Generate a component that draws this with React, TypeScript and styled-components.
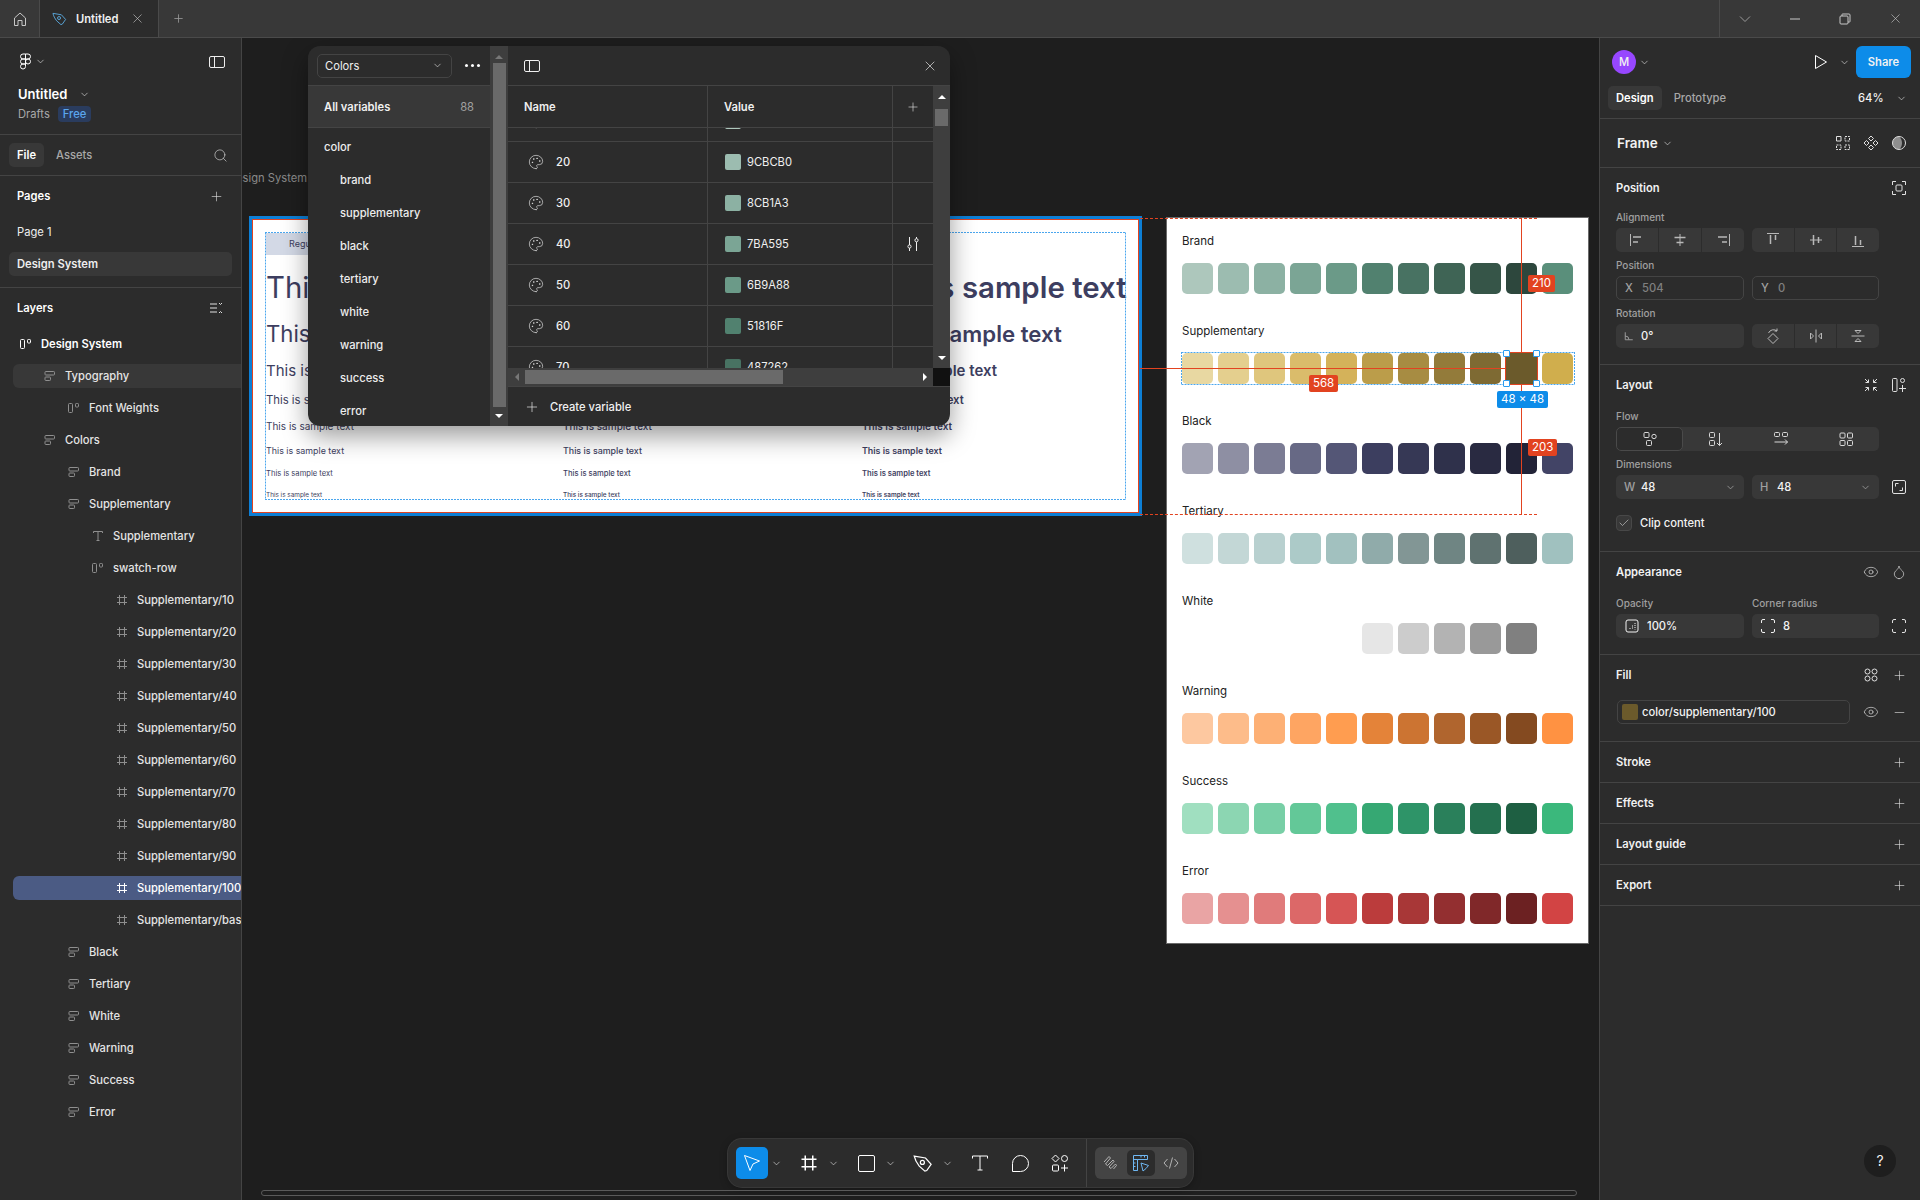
import React from "react";
import styled, { createGlobalStyle, css } from "styled-components";
import { ChevronDown, Eye, Droplet, Palette, Plus, Search, Minus, X, Check } from "lucide-react";

const GlobalStyle = createGlobalStyle`
  html, body { margin: 0; padding: 0; background: #1e1e1e; overflow: hidden; }
  * { box-sizing: border-box; }
  body { font-family: Inter, "Noto Sans", sans-serif; font-size: 11.2px; color: #fff; }
  svg { display: block; flex: none; }
`;

// figma-ish glyphs that the icon packs don't have
const Ico: React.FC<{ s?: number; v?: number; children: React.ReactNode }> = ({ s = 16, v = 16, children }) => (
  <svg width={s} height={s} viewBox={`0 0 ${v} ${v}`} fill="none" stroke="currentColor">
    {children}
  </svg>
);

const FigmaLogo = () => (
  <svg width="13" height="18" viewBox="0 0 13 18" fill="none" stroke="#fff">
    <path d="M6.5 1H4a2.5 2.5 0 0 0 0 5h2.5z" />
    <path d="M6.5 1H9a2.5 2.5 0 0 1 0 5H6.5z" />
    <path d="M6.5 6H4a2.5 2.5 0 0 0 0 5h2.5z" />
    <circle cx="9" cy="8.5" r="2.5" />
    <path d="M6.5 11H4a2.5 2.5 0 1 0 2.5 2.5z" />
  </svg>
);
const SidebarIcon = () => (
  <Ico>
    <rect x="0.5" y="2.5" width="15" height="11" rx="1.5" />
    <path d="M5.5 2.5v11" />
  </Ico>
);
const HomeIcon = () => (
  <Ico>
    <path d="M2.5 7L8 2l5.5 5v7.5h-3.5v-5H6v5H2.5z" />
  </Ico>
);
const PenIcon: React.FC<{ s?: number }> = ({ s = 16 }) => (
  <Ico s={s}>
    <path d="M1 2.5l9 1.5 4.5 5-3.5 5-1.5.5L5 10.5C3 8 1.5 5 1 2.5z" />
    <circle cx="7.5" cy="7.5" r="1.6" />
  </Ico>
);
const CollapseIcon = () => (
  <Ico>
    <path d="M2 4h7M2 8h7M2 12h7M11 3l1.5 1.5L14 3M11 13l1.5-1.5L14 13" />
  </Ico>
);
const AutoRowIcon = () => (
  <Ico s={12} v={12}>
    <rect x="0.5" y="1.5" width="4" height="9" rx="1" />
    <rect x="7.5" y="1.5" width="3" height="3.5" rx="0.8" />
  </Ico>
);
const StackIcon = () => (
  <Ico s={12} v={12}>
    <rect x="1" y="1.5" width="9.5" height="3.5" rx="0.8" />
    <rect x="1" y="7" width="5.5" height="3.5" rx="0.8" />
  </Ico>
);
const TextLayerIcon = () => (
  <Ico s={12} v={12}>
    <path d="M1.5 3V1.5h9V3M6 1.5v9M4.5 10.5h3" />
  </Ico>
);
const FrameIcon: React.FC<{ s?: number }> = ({ s = 12 }) => (
  <svg width={s} height={s} viewBox="0 0 12 12" fill="none" stroke="currentColor">
    <path d="M3.5 1v10M8.5 1v10M1 3.5h10M1 8.5h10" />
  </svg>
);
const SlidersIcon = () => (
  <Ico>
    <path d="M4.5 1v8M4.5 12v3M11.5 1v1.5M11.5 6v9" />
    <circle cx="4.5" cy="10.5" r="1.6" />
    <circle cx="11.5" cy="4.2" r="1.6" />
  </Ico>
);
const CursorIcon = () => (
  <svg width="20" height="20" viewBox="0 0 20 20" fill="none" stroke="#fff" strokeLinejoin="round">
    <path d="M2.5 2.5l15 5.5-6.5 3L8 17.5z" />
  </svg>
);
const RectTool = () => (
  <svg width="17" height="17" viewBox="0 0 17 17" fill="none" stroke="#fff">
    <rect x="0.5" y="0.5" width="16" height="16" rx="1.5" />
  </svg>
);
const TextTool = () => (
  <svg width="16" height="16" viewBox="0 0 16 16" fill="none" stroke="#fff">
    <path d="M.5 3.5V1h15v2.5M8 1v14M5.5 15h5" />
  </svg>
);
const CommentTool = () => (
  <svg width="17" height="17" viewBox="0 0 17 17" fill="none" stroke="#fff">
    <path d="M.5 16.5V8.5a8 8 0 1 1 8 8z" />
  </svg>
);
const ActionsTool = () => (
  <svg width="18" height="18" viewBox="0 0 18 18" fill="none" stroke="#fff">
    <path d="M4.5 1L8 4.5 4.5 8 1 4.5z" />
    <circle cx="13.5" cy="4.5" r="3" />
    <rect x="1.5" y="11" width="6" height="6" rx="1" />
    <path d="M13.5 10.5v7M10 14h7" />
  </svg>
);
const DrawMode = () => (
  <svg width="16" height="16" viewBox="0 0 16 16" fill="none" stroke="currentColor">
    <path d="M1 7l5-5.5L7.5 3 2.5 9l2 1.5L10 5l1 1.5-5 5.5 2 1.5L12.5 9l1 1.5-3 3.5" />
  </svg>
);
const DevMode = () => (
  <svg width="18" height="18" viewBox="0 0 18 18" fill="none" stroke="currentColor">
    <path d="M1.5 16.5v-15h14v4h-10v11zM5.5 5.5v11M1.5 5.5h4M1.5 9h2M1.5 12.5h2M9 1.5v2M12.5 1.5v2" />
    <path d="M9 9l7.5 2.5-2.5 3-3 2.5z" />
  </svg>
);
const CodeMode = () => (
  <svg width="16" height="16" viewBox="0 0 16 16" fill="none" stroke="currentColor">
    <path d="M4.5 4L1 8l3.5 4M11.5 4L15 8l-3.5 4M9.5 2.5l-3 11" />
  </svg>
);

const GlyphIcons: Record<string, React.ReactNode> = {
  grid: <Ico><path d="M1.5 1.5h4.5v4.5h-4.5z" /><path strokeDasharray="2 1" d="M10 1.5h4.5v4.5H10zM1.5 10H6v4.5H1.5zM10 10h4.5v4.5H10z" /></Ico>,
  comp: <Ico><path d="M8 1l2.5 2.5L8 6 5.5 3.5zM3.5 5.5L6 8l-2.5 2.5L1 8zM12.5 5.5L15 8l-2.5 2.5L10 8zM8 10l2.5 2.5L8 15l-2.5-2.5z" /></Ico>,
  mask: <Ico><circle cx="8" cy="8" r="6.5" /><path fill="currentColor" fillOpacity=".55" stroke="none" d="M8 1.5a6.5 6.5 0 0 0 0 13c2-1.5 3-4 3-6.5s-1-5-3-6.5z" /></Ico>,
  focus: <Ico><path d="M1.5 5V1.5H5M11 1.5h3.5V5M14.5 11v3.5H11M5 14.5H1.5V11" /><rect x="5" y="5" width="6" height="6" rx="1" /></Ico>,
  alL: <Ico><path d="M1.5 2v12" /><path d="M4 5h8M4 10h5" strokeWidth="1.5" /></Ico>,
  alC: <Ico><path d="M8 2v12" /><path d="M2.5 5.5h11M4.5 10.5h7" strokeWidth="1.5" /></Ico>,
  alR: <Ico><path d="M14.5 2v12" /><path d="M12 5H3M12 10H7" strokeWidth="1.5" /></Ico>,
  alT: <Ico><path d="M2 1.5h12" /><path d="M5.5 3v9M10.5 3v5" strokeWidth="1.5" /></Ico>,
  alM: <Ico><path d="M2 8h12" /><path d="M5.5 3v10M10.5 5v6" strokeWidth="1.5" /></Ico>,
  alB: <Ico><path d="M2 14.5h12" /><path d="M5.5 13V4M10.5 13V8" strokeWidth="1.5" /></Ico>,
  rot: <Ico><path d="M8 5.5L13 10.5 8 15.5 3 10.5zM3.5 5A5.5 5.5 0 0 1 12 3M12 .5V3H9.5" /></Ico>,
  flipH: <Ico><path d="M8 1.5v13M2.5 5l3 3-3 3zM13.5 5l-3 3 3 3z" /></Ico>,
  flipV: <Ico><path d="M1.5 8h13M5 2.5l3 3 3-3zM5 13.5l3-3 3 3z" /></Ico>,
  shrink: <Ico><path d="M2 2l3.5 3.5M5.5 2.5v3h-3M14 2l-3.5 3.5M10.5 2.5v3h3M2 14l3.5-3.5M5.5 13.5v-3h-3M14 14l-3.5-3.5M10.5 13.5v-3h3" /></Ico>,
  addLayout: <Ico><rect x="1.5" y="1.5" width="4.5" height="13" rx="1" /><circle cx="11.5" cy="3.5" r="2" /><path d="M11.5 8v7M8 11.5h7" /></Ico>,
  free: <Ico><rect x="2" y="1.5" width="5" height="5" rx="1" /><circle cx="12" cy="5.5" r="2.2" /><rect x="4.5" y="9.5" width="5" height="5" rx="1" /></Ico>,
  vert: <Ico><rect x="1.5" y="1.5" width="5" height="5" rx="1" /><rect x="1.5" y="9.5" width="5" height="5" rx="1" /><path d="M11.5 2v12.5M9 12l2.5 2.5L14 12" /></Ico>,
  horiz: <Ico><rect x="1.5" y="1.5" width="5" height="4" rx="1" /><rect x="9.5" y="1.5" width="5" height="4" rx="1" /><path d="M1.5 11h13M12 8.5l2.5 2.5-2.5 2.5" /></Ico>,
  wrap: <Ico><rect x="2" y="2" width="5" height="5" rx="1" /><rect x="9.5" y="2" width="5" height="5" rx="1" /><rect x="2" y="9.5" width="5" height="5" rx="1" /><rect x="9.5" y="9.5" width="5" height="5" rx="1" /></Ico>,
  resize: <Ico><rect x="1.5" y="1.5" width="13" height="13" rx="1.5" /><path d="M4.5 7.5v-3h3M11.5 8.5v3h-3" /></Ico>,
  corners: <Ico><path d="M1.5 5V3a1.5 1.5 0 0 1 1.5-1.5h2M11 1.5h2A1.5 1.5 0 0 1 14.5 3v2M14.5 11v2a1.5 1.5 0 0 1-1.5 1.5h-2M5 14.5H3A1.5 1.5 0 0 1 1.5 13v-2" /></Ico>,
  opacity: <Ico><rect x="2" y="2" width="12" height="12" rx="2" /><path strokeDasharray="1 1" d="M11 5v6.5M8.5 7.5v4M6 10v1.5" /></Ico>,
  styles: <Ico><circle cx="4.5" cy="4.5" r="2.5" /><circle cx="11.5" cy="4.5" r="2.5" /><circle cx="4.5" cy="11.5" r="2.5" /><circle cx="11.5" cy="11.5" r="2.5" /></Ico>,
};

// auto layout hover outline: dots drawn over the children
const dottedOverlay = css`
  position: relative;
  &::after {
    content: "";
    position: absolute;
    inset: -1px;
    pointer-events: none;
    background-image:
      linear-gradient(to right, #4aa6ee 60%, transparent 60%),
      linear-gradient(to right, #4aa6ee 60%, transparent 60%),
      linear-gradient(to bottom, #4aa6ee 60%, transparent 60%),
      linear-gradient(to bottom, #4aa6ee 60%, transparent 60%);
    background-size: 3px 1px, 3px 1px, 1px 3px, 1px 3px;
    background-position: top, bottom, left, right;
    background-repeat: repeat-x, repeat-x, repeat-y, repeat-y;
  }
`;

const Window = styled.div`
  width: 1920px;
  height: 1200px;
  display: flex;
  flex-direction: column;
  overflow: hidden;
`;

/* tab strip */
const TabBar = styled.header`
  height: 38px;
  flex: none;
  display: flex;
  align-items: stretch;
  background: #383838;
  border-bottom: 1px solid #4a4a4a;
  color: #c8c8c8;
`;
const HomeTab = styled.div`
  width: 40px;
  display: flex;
  align-items: center;
  justify-content: center;
  border-right: 1px solid #4a4a4a;
`;
const FileTab = styled.div`
  width: 119px;
  display: flex;
  align-items: center;
  padding-left: 12px;
  gap: 9px;
  background: #2c2c2c;
  border-right: 1px solid #4a4a4a;
  color: #5aa7dc;
`;
const FileTabName = styled.span`
  width: 45px;
  font-weight: 600;
  color: #f0f0f0;
`;
const NewTab = styled.div`
  width: 38px;
  display: flex;
  align-items: center;
  justify-content: center;
  color: #9a9a9a;
`;
const TabSpacer = styled.div`
  flex: 1;
  border-right: 1px solid #4a4a4a;
`;
const WinControl = styled.div`
  width: 50px;
  display: flex;
  align-items: center;
  justify-content: center;
  color: #c8c8c8;
`;

const Body = styled.div`
  flex: 1;
  display: flex;
  min-height: 0;
`;

/* left column */
const LeftPanel = styled.aside`
  width: 242px;
  flex: none;
  background: #2c2c2c;
  border-right: 1px solid #444;
  color: #eee;
  position: relative;
  z-index: 2;
`;
const LeftBlock = styled.div<{ $h: number }>`
  height: ${p => p.$h}px;
  border-bottom: 1px solid #444;
  padding: 0 9px;
`;
const LogoRow = styled.div`
  height: 47px;
  display: flex;
  align-items: center;
  padding: 0 7px 0 10px;
  gap: 3px;
`;
const Grow = styled.div`
  flex: 1;
`;
const ProjectName = styled.div`
  display: flex;
  align-items: center;
  height: 18px;
  padding-left: 9px;
  gap: 12px;
  font-size: 13px;
  font-weight: 600;
  color: #fff;
`;
const ProjectMeta = styled.div`
  display: flex;
  align-items: center;
  gap: 8px;
  padding-left: 9px;
  margin-top: 3px;
  color: #a8a8a8;
`;
const FreeBadge = styled.span`
  height: 16px;
  line-height: 16px;
  padding: 0 5px;
  border-radius: 4px;
  background: #2a3c5e;
  color: #5ba6ee;
  font-weight: 500;
`;
const TabsRow = styled.div`
  height: 40px;
  display: flex;
  align-items: center;
  gap: 4px;
  color: #eee;
`;
const PillTab = styled.div<{ $on?: boolean }>`
  height: 24px;
  line-height: 24px;
  padding: 0 8px;
  border-radius: 5px;
  font-weight: ${p => (p.$on ? 600 : 500)};
  color: ${p => (p.$on ? "#fff" : "#a8a8a8")};
  background: ${p => (p.$on ? "#383838" : "transparent")};
`;
const SectionHead = styled.div`
  height: 40px;
  display: flex;
  align-items: center;
  justify-content: space-between;
  padding: 0 4px 0 8px;
  font-weight: 600;
  color: #fff;
`;
const PageList = styled.div`
  display: flex;
  flex-direction: column;
  gap: 8px;
  padding-top: 4px;
`;
const PageRow = styled.div<{ $on?: boolean }>`
  height: 24px;
  line-height: 24px;
  padding: 0 8px;
  border-radius: 5px;
  font-weight: ${p => (p.$on ? 600 : 400)};
  background: ${p => (p.$on ? "#383838" : "transparent")};
`;
const LayerHead = styled(SectionHead)`
  padding: 0 13px 0 17px;
`;
const LayerList = styled.div`
  display: flex;
  flex-direction: column;
  gap: 8px;
  padding: 4px 0 0 13px;
`;
const LayerRow = styled.div<{ $level: number; $state?: "hover" | "selected"; $strong?: boolean }>`
  height: 24px;
  display: flex;
  align-items: center;
  gap: 9px;
  overflow: hidden;
  white-space: nowrap;
  border-radius: 6px 0 0 6px;
  padding-left: ${p => 7 + p.$level * 24}px;
  font-weight: ${p => (p.$strong ? 600 : 500)};
  color: ${p => (p.$strong || p.$state === "selected" ? "#fff" : "#e4e4e4")};
  background: ${p => (p.$state === "selected" ? "#4b5b84" : p.$state === "hover" ? "#383838" : "transparent")};
  svg { color: ${p => (p.$strong || p.$state === "selected" ? "#fff" : "#8f8f8f")}; }
`;

/* canvas */
const Canvas = styled.main`
  flex: 1;
  position: relative;
  overflow: hidden;
  background: #1e1e1e;
`;
const FrameLabel = styled.span`
  position: absolute;
  left: -14px;
  top: 133px;
  color: #8a8a8a;
`;
const TypeFrame = styled.section`
  position: absolute;
  left: 7px;
  top: 178px;
  width: 893px;
  height: 300px;
  padding: 14px;
  background: #fff;
  border: 3px solid #0d7fd6;
  box-shadow: inset 0 0 0 1px #e24320;
`;
const TypeInner = styled.div`
  ${dottedOverlay}
  height: 266px;
  color: #3d3e60;
  white-space: nowrap;
`;
const HeaderCell = styled.div`
  width: 120px;
  height: 22px;
  line-height: 22px;
  padding-left: 23px;
  background: #d3d9e6;
  font-size: 9px;
`;
const TypeGrid = styled.div`
  display: grid;
  grid-template-columns: 297px 299px 1fr;
  padding-top: 10px;
`;
const TypeLine = styled.div<{ $size: number; $h: number; $weight: number }>`
  height: ${p => p.$h}px;
  line-height: ${p => p.$h}px;
  font-size: ${p => p.$size}px;
  font-weight: ${p => p.$weight};
`;
const SwatchFrame = styled.section`
  position: absolute;
  left: 925px;
  top: 180px;
  width: 421px;
  height: 725px;
  padding: 14px 14px 0 15px;
  background: #fff;
  outline: 1px solid #6a6a6a;
  color: #222;
`;
const SwatchSection = styled.div`
  height: 90px;
`;
const SwatchTitle = styled.div`
  height: 18px;
  line-height: 18px;
  margin-bottom: 13px;
  font-size: 11.5px;
`;
const SwatchRow = styled.div<{ $dotted?: boolean }>`
  display: flex;
  gap: 5px;
  ${p => p.$dotted && dottedOverlay}
`;
const Swatch = styled.div<{ $c: string }>`
  width: 31px;
  height: 31px;
  border-radius: 5px;
  background: ${p => p.$c};
`;

/* measure overlays sit on top of the frames */
const RedV = styled.div<{ $x: number; $y: number; $h: number }>`
  position: absolute;
  left: ${p => p.$x}px;
  top: ${p => p.$y}px;
  height: ${p => p.$h}px;
  width: 1px;
  background: #e24320;
`;
const RedH = styled.div<{ $x: number; $y: number; $w: number; $dashed?: boolean }>`
  position: absolute;
  left: ${p => p.$x}px;
  top: ${p => p.$y}px;
  width: ${p => p.$w}px;
  height: 0;
  border-top: 1px ${p => (p.$dashed ? "dashed" : "solid")} #e24320;
`;
const MeasureTag = styled.div<{ $x: number; $y: number; $blue?: boolean }>`
  position: absolute;
  left: ${p => p.$x}px;
  top: ${p => p.$y}px;
  height: 17px;
  line-height: 17px;
  padding: 0 4px;
  border-radius: 2px;
  font-size: 11.5px;
  color: #fff;
  white-space: nowrap;
  background: ${p => (p.$blue ? "#0d8ce9" : "#e24320")};
`;
const Selection = styled.div`
  position: absolute;
  left: 1264px;
  top: 315px;
  width: 31px;
  height: 31px;
  background: #6b5a2b;
  outline: 1px solid #e24320;
`;
const Handle = styled.div<{ $r: boolean; $b: boolean }>`
  position: absolute;
  ${p => (p.$r ? "right" : "left")}: -3px;
  ${p => (p.$b ? "bottom" : "top")}: -3px;
  width: 7px;
  height: 7px;
  background: #fff;
  border: 1px solid #2a9bf0;
  border-radius: 1px;
`;

/* variables dialog */
const VarPanel = styled.section`
  position: absolute;
  left: 66px;
  top: 8px;
  width: 642px;
  height: 380px;
  display: flex;
  border-radius: 12px;
  overflow: hidden;
  background: #2c2c2c;
  color: #f0f0f0;
`;
const VarShadow = styled.div`
  position: absolute;
  left: 66px;
  top: 8px;
  width: 642px;
  height: 380px;
  border-radius: 12px;
  box-shadow: 0 10px 26px rgba(0, 0, 0, 0.4);
`;
const VarSide = styled.div`
  width: 182px;
  flex: none;
`;
const VarSideHead = styled.div`
  height: 40px;
  display: flex;
  align-items: center;
  padding-left: 9px;
  gap: 13px;
  border-bottom: 1px solid #444;
`;
const CollectionSelect = styled.div`
  width: 135px;
  height: 24px;
  display: flex;
  align-items: center;
  justify-content: space-between;
  padding: 0 8px 0 7px;
  border: 1px solid #444;
  border-radius: 5px;
`;
const MoreDots = styled.div`
  display: flex;
  gap: 3px;
`;
const Dot = styled.span`
  width: 3px;
  height: 3px;
  border-radius: 50%;
  background: #fff;
`;
const AllVars = styled.div`
  height: 42px;
  display: flex;
  align-items: center;
  justify-content: space-between;
  padding: 0 16px;
  background: #383838;
  border-bottom: 1px solid #444;
  font-weight: 600;
`;
const AllVarsCount = styled.span`
  font-weight: 400;
  color: #a0a0a0;
`;
const GroupList = styled.div`
  padding-top: 3px;
`;
const GroupRow = styled.div<{ $sub?: boolean }>`
  height: 33px;
  line-height: 33px;
  padding-left: ${p => (p.$sub ? 32 : 16)}px;
  font-weight: 500;
  color: #ededed;
`;
const VScroll = styled.div<{ $w: number }>`
  width: ${p => p.$w}px;
  flex: none;
  display: flex;
  flex-direction: column;
  align-items: center;
  background: #3e3e3e;
`;
const Arrow = styled.div<{ $dir: "up" | "down" | "left" | "right"; $dim?: boolean }>`
  width: 0;
  height: 0;
  flex: none;
  border: 4px solid transparent;
  ${p => `border-${{ up: "bottom", down: "top", left: "right", right: "left" }[p.$dir]}-color: ${p.$dim ? "#777" : "#fff"};`}
  ${p => `border-${p.$dir}-width: 0;`}
`;
const ScrollEnd = styled.div`
  height: 17px;
  flex: none;
  display: flex;
  align-items: center;
  justify-content: center;
`;
const VThumb = styled.div<{ $h: number }>`
  width: 13px;
  height: ${p => p.$h}px;
  flex: none;
  background: #6a6a6a;
`;
const VGap = styled.div<{ $h?: number }>`
  flex: ${p => (p.$h ? "none" : 1)};
  height: ${p => (p.$h ? `${p.$h}px` : "auto")};
`;
const VarMain = styled.div`
  flex: 1;
  min-width: 0;
  display: flex;
  flex-direction: column;
`;
const VarMainHead = styled.div`
  height: 40px;
  flex: none;
  display: flex;
  align-items: center;
  justify-content: space-between;
  padding: 0 12px 0 16px;
  border-bottom: 1px solid #444;
`;
const TableArea = styled.div`
  height: 282px;
  flex: none;
  display: flex;
`;
const Table = styled.div`
  width: 425px;
  flex: none;
  overflow: hidden;
`;
const TableHead = styled.div`
  height: 42px;
  display: grid;
  grid-template-columns: 200px 185px 40px;
  border-bottom: 1px solid #444;
  font-weight: 600;
`;
const HeadCell = styled.div<{ $line?: boolean }>`
  display: flex;
  align-items: center;
  padding-left: 16px;
  border-right: ${p => (p.$line ? "1px solid #444" : "none")};
`;
const AddCell = styled.div`
  display: flex;
  align-items: center;
  justify-content: center;
`;
const TableBody = styled.div`
  height: 240px;
  overflow: hidden;
`;
const TableRows = styled.div`
  margin-top: -27px;
`;
const VarRow = styled.div`
  height: 41px;
  display: grid;
  grid-template-columns: 200px 185px 40px;
  border-bottom: 1px solid #444;
`;
const NameCell = styled.div`
  display: flex;
  align-items: center;
  gap: 12px;
  padding-left: 20px;
  border-right: 1px solid #444;
  font-weight: 500;
  svg { color: #e4e4e4; }
`;
const ValueCell = styled.div`
  display: flex;
  align-items: center;
  gap: 6px;
  padding-left: 17px;
  border-right: 1px solid #444;
`;
const ValueChip = styled.span<{ $c: string }>`
  width: 16px;
  height: 16px;
  border-radius: 2px;
  background: ${p => p.$c};
`;
const HScroll = styled.div`
  height: 18px;
  flex: none;
  display: flex;
  align-items: center;
  background: #3e3e3e;
`;
const HEnd = styled.div`
  width: 17px;
  height: 18px;
  flex: none;
  display: flex;
  align-items: center;
  justify-content: center;
`;
const HThumb = styled.div`
  width: 258px;
  height: 14px;
  background: #6a6a6a;
`;
const HCorner = styled.div`
  width: 17px;
  height: 18px;
  background: #111;
`;
const VarFooter = styled.div`
  flex: 1;
  display: flex;
  align-items: center;
  gap: 10px;
  padding-left: 16px;
  border-top: 1px solid #444;
  font-weight: 500;
`;

/* bottom toolbar */
const Toolbar = styled.div`
  position: absolute;
  left: 486px;
  top: 1101px;
  width: 465px;
  height: 48px;
  display: flex;
  align-items: center;
  padding-left: 8px;
  background: #2c2c2c;
  border-radius: 14px;
  box-shadow: 0 0 0 1px #383838, 0 2px 8px rgba(0, 0, 0, 0.3);
`;
const ToolSet = styled.div<{ $mr?: number }>`
  display: flex;
  align-items: center;
  margin-right: ${p => p.$mr ?? 9}px;
`;
const ToolBtn = styled.div<{ $on?: boolean }>`
  width: 32px;
  height: 32px;
  display: flex;
  align-items: center;
  justify-content: center;
  border-radius: 5px;
  background: ${p => (p.$on ? "#0d8ce9" : "transparent")};
`;
const ToolCaret = styled.div`
  width: 16px;
  display: flex;
  justify-content: center;
`;
const ToolDivider = styled.div`
  width: 1px;
  height: 48px;
  margin-left: -1px;
  background: #444;
`;
const ModeGroup = styled.div`
  margin-left: 8px;
  width: 92px;
  height: 32px;
  display: flex;
  align-items: center;
  gap: 2px;
  padding: 0 2px;
  background: #444;
  border-radius: 6px;
`;
const ModeBtn = styled.div<{ $on?: boolean }>`
  width: 28px;
  height: 26px;
  display: flex;
  align-items: center;
  justify-content: center;
  border-radius: 5px;
  background: ${p => (p.$on ? "#2c2c2c" : "transparent")};
  color: ${p => (p.$on ? "#6fb7f2" : "#b4b4b4")};
`;
const HScrollBar = styled.div`
  position: absolute;
  left: 19px;
  top: 1152px;
  width: 1316px;
  height: 6px;
  border: 1px solid #5a5a5a;
  border-radius: 3px;
`;

/* right column */
const RightPanel = styled.aside`
  width: 321px;
  flex: none;
  background: #2c2c2c;
  border-left: 1px solid #444;
  color: #f2f2f2;
  position: relative;
  z-index: 2;
`;
const TopArea = styled.div`
  height: 81px;
  border-bottom: 1px solid #444;
  padding: 8px 9px 0 8px;
`;
const TopRow = styled.div`
  height: 32px;
  display: flex;
  align-items: center;
`;
const Avatar = styled.div`
  width: 24px;
  height: 24px;
  margin-left: 4px;
  border-radius: 50%;
  background: #9747ff;
  display: flex;
  align-items: center;
  justify-content: center;
  font-weight: 500;
`;
const PlayBtn = styled.div`
  margin-right: 8px;
`;
const ShareBtn = styled.div`
  width: 55px;
  height: 32px;
  margin-left: 4px;
  line-height: 32px;
  text-align: center;
  background: #0d8ce9;
  border-radius: 6px;
  font-weight: 600;
`;
const ModeTabs = styled.div`
  height: 24px;
  margin-top: 8px;
  display: flex;
  align-items: center;
  gap: 4px;
`;
const ZoomValue = styled.div`
  margin-left: auto;
  margin-right: 4px;
  width: 49px;
  display: flex;
  align-items: center;
  justify-content: space-between;
  font-weight: 500;
`;
const Section = styled.div<{ $pb: number }>`
  padding: 8px 9px ${p => p.$pb}px 16px;
  border-bottom: 1px solid #444;
`;
const TitleRow = styled.div`
  height: 24px;
  display: flex;
  align-items: center;
  gap: 4px;
  font-weight: 600;
`;
const SectionIcon = styled.div`
  width: 24px;
  height: 24px;
  display: flex;
  align-items: center;
  justify-content: center;
  color: #e0e0e0;
`;
const FrameTitle = styled.div`
  height: 49px;
  display: flex;
  align-items: center;
  gap: 4px;
  padding: 0 9px 0 17px;
  border-bottom: 1px solid #444;
  font-size: 13.5px;
  font-weight: 600;
`;
const PropLabel = styled.div<{ $mt: number }>`
  height: 16px;
  line-height: 16px;
  margin: ${p => p.$mt}px 0 3px;
  font-size: 10px;
  font-weight: 500;
  color: #a0a0a0;
`;
const FieldGrid = styled.div<{ $auto?: boolean }>`
  display: grid;
  grid-template-columns: 128px 127px 24px;
  column-gap: 8px;
  height: ${p => (p.$auto ? "auto" : "24px")};
`;
const Seg = styled.div`
  display: flex;
  align-items: center;
  background: #383838;
  border-radius: 5px;
  overflow: hidden;
  color: #b8b8b8;
`;
const SegCell = styled.div<{ $line?: boolean }>`
  flex: 1;
  height: 24px;
  display: flex;
  align-items: center;
  justify-content: center;
  border-right: ${p => (p.$line ? "1px solid #2c2c2c" : "none")};
`;
const FlowCell = styled(SegCell)<{ $on?: boolean }>`
  color: #d8d8d8;
  border: ${p => (p.$on ? "1px solid #4a4a4a" : "none")};
  border-radius: 5px;
  background: ${p => (p.$on ? "#2c2c2c" : "transparent")};
`;
const FlowSeg = styled(Seg)`
  width: 263px;
  height: 24px;
`;
const Field = styled.div<{ $ghost?: boolean }>`
  display: flex;
  align-items: center;
  gap: 7px;
  padding: 0 8px;
  border-radius: 5px;
  background: ${p => (p.$ghost ? "transparent" : "#383838")};
  border: ${p => (p.$ghost ? "1px solid #444" : "none")};
  color: ${p => (p.$ghost ? "#808080" : "#f2f2f2")};
  font-weight: 500;
`;
const FieldKey = styled.span`
  color: #a0a0a0;
  width: 10px;
`;
const FieldCaret = styled.span`
  margin-left: auto;
  color: #b0b0b0;
`;
const CenterCell = styled.div`
  display: flex;
  align-items: center;
  justify-content: center;
  color: #e0e0e0;
`;
const ClipRow = styled.div`
  height: 16px;
  margin-top: 16px;
  display: flex;
  align-items: center;
  gap: 8px;
  font-weight: 500;
`;
const CheckBox = styled.span`
  width: 16px;
  height: 16px;
  display: flex;
  align-items: center;
  justify-content: center;
  background: #383838;
  border: 1px solid #484848;
  border-radius: 4px;
`;
const FillRow = styled.div`
  margin-top: 13px;
  height: 24px;
  display: flex;
  align-items: center;
  gap: 4px;
`;
const FillField = styled.div`
  width: 233px;
  height: 24px;
  margin: 0 5px 0 1px;
  display: flex;
  align-items: center;
  gap: 4px;
  padding-left: 4px;
  border: 1px solid #444;
  border-radius: 5px;
  font-weight: 500;
`;
const FillChip = styled.span`
  width: 16px;
  height: 16px;
  border-radius: 2px;
  background: #6b5a2b;
`;
const HelpBtn = styled.div`
  position: absolute;
  right: 24px;
  bottom: 23px;
  width: 32px;
  height: 32px;
  line-height: 32px;
  text-align: center;
  border-radius: 50%;
  background: #1e1e1e;
  font-size: 14px;
`;

const layers: [string, number, "stack" | "row" | "text" | "frame"][] = [
  ["Design System", 0, "row"],
  ["Typography", 1, "stack"],
  ["Font Weights", 2, "row"],
  ["Colors", 1, "stack"],
  ["Brand", 2, "stack"],
  ["Supplementary", 2, "stack"],
  ["Supplementary", 3, "text"],
  ["swatch-row", 3, "row"],
  ["Supplementary/10", 4, "frame"],
  ["Supplementary/20", 4, "frame"],
  ["Supplementary/30", 4, "frame"],
  ["Supplementary/40", 4, "frame"],
  ["Supplementary/50", 4, "frame"],
  ["Supplementary/60", 4, "frame"],
  ["Supplementary/70", 4, "frame"],
  ["Supplementary/80", 4, "frame"],
  ["Supplementary/90", 4, "frame"],
  ["Supplementary/100", 4, "frame"],
  ["Supplementary/base", 4, "frame"],
  ["Black", 2, "stack"],
  ["Tertiary", 2, "stack"],
  ["White", 2, "stack"],
  ["Warning", 2, "stack"],
  ["Success", 2, "stack"],
  ["Error", 2, "stack"],
];
const layerIcon = { stack: <StackIcon />, row: <AutoRowIcon />, text: <TextLayerIcon />, frame: <FrameIcon /> };

const typeLines = [
  { size: 29.4, h: 46 },
  { size: 22.2, h: 46 },
  { size: 15, h: 28 },
  { size: 11.3, h: 30 },
  { size: 10, h: 22 },
  { size: 8.9, h: 28 },
  { size: 7.6, h: 18 },
  { size: 6.4, h: 25 },
];

const palettes: { name: string; colors: string[]; dotted?: boolean }[] = [
  { name: "Brand", colors: ["#adc7bc", "#9cbcb0", "#8cb1a3", "#7ba595", "#6b9a88", "#51816f", "#487262", "#3f6455", "#365548", "#2d473d", "#5a8f7b"] },
  { name: "Supplementary", dotted: true, colors: ["#e8d8a2", "#e4cf8e", "#dfc67d", "#dabc6b", "#d4b25a", "#bb9d4a", "#a78c42", "#937b3a", "#7e6a33", "#6b5a2b", "#d0ae4d"] },
  { name: "Black", colors: ["#a2a3b3", "#8e8fa3", "#7b7c94", "#676985", "#545676", "#3c3e5f", "#363855", "#2f314b", "#292a41", "#222337", "#424466"] },
  { name: "Tertiary", colors: ["#cfe0df", "#c3d7d6", "#b8d0cf", "#accac8", "#a2c1bf", "#90abaa", "#829695", "#6f8583", "#5f7270", "#4e5f5d", "#a0c1bf"] },
  { name: "White", colors: ["transparent", "transparent", "transparent", "transparent", "transparent", "#e6e6e6", "#cccccc", "#b3b3b3", "#999999", "#808080", "transparent"] },
  { name: "Warning", colors: ["#fdc8a0", "#fdbc8a", "#fdb075", "#fea562", "#ff9d50", "#e48339", "#cc7432", "#b0652e", "#9a5726", "#844a20", "#ff9242"] },
  { name: "Success", colors: ["#a0dfc0", "#8cd6b2", "#78cfa6", "#63c898", "#50c08d", "#36a873", "#2e9468", "#2a805b", "#24704f", "#1e5f42", "#3bb87c"] },
  { name: "Error", colors: ["#e9a4a4", "#e59090", "#e07b7b", "#dc6868", "#d65555", "#bb3c3c", "#a83737", "#932f30", "#802829", "#6c2122", "#d24444"] },
];

const varRows = [
  ["10", "ADC7BC"],
  ["20", "9CBCB0"],
  ["30", "8CB1A3"],
  ["40", "7BA595"],
  ["50", "6B9A88"],
  ["60", "51816F"],
  ["70", "487262"],
];

const Caret: React.FC<{ c?: string }> = ({ c = "#d0d0d0" }) => <ChevronDown size={11} color={c} strokeWidth={1.5} />;

const VariablesDialog = () => (
  <>
    <VarShadow />
    <VarPanel>
      <VarSide>
        <VarSideHead>
          <CollectionSelect>
            Colors
            <Caret />
          </CollectionSelect>
          <MoreDots>
            <Dot />
            <Dot />
            <Dot />
          </MoreDots>
        </VarSideHead>
        <AllVars>
          All variables
          <AllVarsCount>88</AllVarsCount>
        </AllVars>
        <GroupList>
          <GroupRow>color</GroupRow>
          {["brand", "supplementary", "black", "tertiary", "white", "warning", "success", "error"].map(g => (
            <GroupRow key={g} $sub>
              {g}
            </GroupRow>
          ))}
        </GroupList>
      </VarSide>
      <VScroll $w={18}>
        <ScrollEnd>
          <Arrow $dir="up" $dim />
        </ScrollEnd>
        <VThumb $h={344} />
        <VGap />
        <ScrollEnd>
          <Arrow $dir="down" />
        </ScrollEnd>
      </VScroll>
      <VarMain>
        <VarMainHead>
          <SidebarIcon />
          <X size={16} strokeWidth={1} />
        </VarMainHead>
        <TableArea>
          <Table>
            <TableHead>
              <HeadCell $line>Name</HeadCell>
              <HeadCell $line>Value</HeadCell>
              <AddCell>
                <Plus size={14} strokeWidth={1} />
              </AddCell>
            </TableHead>
            <TableBody>
              <TableRows>
                {varRows.map(([name, hex]) => (
                  <VarRow key={name}>
                    <NameCell>
                      <Palette size={16} strokeWidth={1} />
                      {name}
                    </NameCell>
                    <ValueCell>
                      <ValueChip $c={`#${hex}`} />
                      {hex}
                    </ValueCell>
                    <AddCell>{name === "40" && <SlidersIcon />}</AddCell>
                  </VarRow>
                ))}
              </TableRows>
            </TableBody>
          </Table>
          <VScroll $w={17}>
            <ScrollEnd>
              <Arrow $dir="up" />
            </ScrollEnd>
            <VGap $h={6} />
            <VThumb $h={17} />
            <VGap />
            <ScrollEnd>
              <Arrow $dir="down" />
            </ScrollEnd>
          </VScroll>
        </TableArea>
        <HScroll>
          <HEnd>
            <Arrow $dir="left" $dim />
          </HEnd>
          <HThumb />
          <Grow />
          <HEnd>
            <Arrow $dir="right" />
          </HEnd>
          <HCorner />
        </HScroll>
        <VarFooter>
          <Plus size={16} strokeWidth={1} />
          Create variable
        </VarFooter>
      </VarMain>
    </VarPanel>
  </>
);

const DesignCanvas = () => (
  <Canvas>
    <FrameLabel>Design System</FrameLabel>
    <TypeFrame>
      <TypeInner>
        <HeaderCell>Regular</HeaderCell>
        <TypeGrid>
          {[400, 500, 600].map(weight => (
            <div key={weight}>
              {typeLines.map(l => (
                <TypeLine key={l.size} $size={l.size} $h={l.h} $weight={weight}>
                  This is sample text
                </TypeLine>
              ))}
            </div>
          ))}
        </TypeGrid>
      </TypeInner>
    </TypeFrame>
    <SwatchFrame>
      {palettes.map(p => (
        <SwatchSection key={p.name}>
          <SwatchTitle>{p.name}</SwatchTitle>
          <SwatchRow $dotted={p.dotted}>
            {p.colors.map((c, i) => (
              <Swatch key={i} $c={c} />
            ))}
          </SwatchRow>
        </SwatchSection>
      ))}
    </SwatchFrame>

    <RedH $x={898} $y={180} $w={397} $dashed />
    <RedH $x={898} $y={476} $w={397} $dashed />
    <RedH $x={898} $y={330} $w={366} />
    <RedV $x={1279} $y={180} $h={296} />
    <Selection>
      <Handle $r={false} $b={false} />
      <Handle $r $b={false} />
      <Handle $r={false} $b />
      <Handle $r $b />
    </Selection>
    <MeasureTag $x={1286} $y={237}>210</MeasureTag>
    <MeasureTag $x={1067} $y={337}>568</MeasureTag>
    <MeasureTag $x={1286} $y={401}>203</MeasureTag>
    <MeasureTag $x={1255} $y={353} $blue>48 × 48</MeasureTag>

    <VariablesDialog />

    <Toolbar>
      <ToolSet>
        <ToolBtn $on>
          <CursorIcon />
        </ToolBtn>
        <ToolCaret>
          <Caret />
        </ToolCaret>
      </ToolSet>
      <ToolSet>
        <ToolBtn>
          <FrameIcon s={18} />
        </ToolBtn>
        <ToolCaret>
          <Caret />
        </ToolCaret>
      </ToolSet>
      <ToolSet>
        <ToolBtn>
          <RectTool />
        </ToolBtn>
        <ToolCaret>
          <Caret />
        </ToolCaret>
      </ToolSet>
      <ToolSet>
        <ToolBtn>
          <PenIcon s={20} />
        </ToolBtn>
        <ToolCaret>
          <Caret />
        </ToolCaret>
      </ToolSet>
      <ToolSet $mr={8}>
        <ToolBtn>
          <TextTool />
        </ToolBtn>
      </ToolSet>
      <ToolSet $mr={8}>
        <ToolBtn>
          <CommentTool />
        </ToolBtn>
      </ToolSet>
      <ToolSet $mr={11}>
        <ToolBtn>
          <ActionsTool />
        </ToolBtn>
      </ToolSet>
      <ToolDivider />
      <ModeGroup>
        <ModeBtn>
          <DrawMode />
        </ModeBtn>
        <ModeBtn $on>
          <DevMode />
        </ModeBtn>
        <ModeBtn>
          <CodeMode />
        </ModeBtn>
      </ModeGroup>
    </Toolbar>
    <HScrollBar />
  </Canvas>
);

const Layers = () => (
  <LayerList>
    {layers.map(([name, level, kind], i) => (
      <LayerRow
        key={i}
        $level={level}
        $strong={i === 0}
        $state={i === 1 ? "hover" : name === "Supplementary/100" ? "selected" : undefined}
      >
        {layerIcon[kind]}
        {name}
      </LayerRow>
    ))}
  </LayerList>
);

const FoldedSection: React.FC<{ title: string }> = ({ title }) => (
  <Section $pb={8}>
    <TitleRow>
      {title}
      <Grow />
      <SectionIcon>
        <Plus size={15} strokeWidth={1} />
      </SectionIcon>
    </TitleRow>
  </Section>
);

const Inspector = () => (
  <RightPanel>
    <TopArea>
      <TopRow>
        <Avatar>M</Avatar>
        <ToolCaret>
          <Caret />
        </ToolCaret>
        <Grow />
        <PlayBtn>
          <svg width="14" height="16" viewBox="0 0 14 16" fill="none" stroke="#fff">
            <path d="M1.5 1.5v13l11-6.5z" strokeLinejoin="round" />
          </svg>
        </PlayBtn>
        <ToolCaret>
          <Caret />
        </ToolCaret>
        <ShareBtn>Share</ShareBtn>
      </TopRow>
      <ModeTabs>
        <PillTab $on>Design</PillTab>
        <PillTab>Prototype</PillTab>
        <ZoomValue>
          64%
          <Caret />
        </ZoomValue>
      </ModeTabs>
    </TopArea>

    <FrameTitle>
      Frame
      <Caret />
      <Grow />
      <SectionIcon>{GlyphIcons.grid}</SectionIcon>
      <SectionIcon>{GlyphIcons.comp}</SectionIcon>
      <SectionIcon>{GlyphIcons.mask}</SectionIcon>
    </FrameTitle>

    <Section $pb={16}>
      <TitleRow>
        Position
        <Grow />
        <SectionIcon>{GlyphIcons.focus}</SectionIcon>
      </TitleRow>
      <PropLabel $mt={9}>Alignment</PropLabel>
      <FieldGrid>
        <Seg>
          <SegCell $line>{GlyphIcons.alL}</SegCell>
          <SegCell $line>{GlyphIcons.alC}</SegCell>
          <SegCell>{GlyphIcons.alR}</SegCell>
        </Seg>
        <Seg>
          <SegCell $line>{GlyphIcons.alT}</SegCell>
          <SegCell $line>{GlyphIcons.alM}</SegCell>
          <SegCell>{GlyphIcons.alB}</SegCell>
        </Seg>
      </FieldGrid>
      <PropLabel $mt={5}>Position</PropLabel>
      <FieldGrid>
        <Field $ghost>
          <FieldKey>X</FieldKey>504
        </Field>
        <Field $ghost>
          <FieldKey>Y</FieldKey>0
        </Field>
      </FieldGrid>
      <PropLabel $mt={5}>Rotation</PropLabel>
      <FieldGrid>
        <Field>
          <FieldKey>
            <Ico s={10}>
              <path d="M2 2v12h12M2 8a6 6 0 0 1 6 6" strokeWidth="1.5" />
            </Ico>
          </FieldKey>
          0°
        </Field>
        <Seg>
          <SegCell $line>{GlyphIcons.rot}</SegCell>
          <SegCell $line>{GlyphIcons.flipH}</SegCell>
          <SegCell>{GlyphIcons.flipV}</SegCell>
        </Seg>
      </FieldGrid>
    </Section>

    <Section $pb={20}>
      <TitleRow>
        Layout
        <Grow />
        <SectionIcon>{GlyphIcons.shrink}</SectionIcon>
        <SectionIcon>{GlyphIcons.addLayout}</SectionIcon>
      </TitleRow>
      <PropLabel $mt={11}>Flow</PropLabel>
      <FlowSeg>
        <FlowCell $on>{GlyphIcons.free}</FlowCell>
        <FlowCell>{GlyphIcons.vert}</FlowCell>
        <FlowCell>{GlyphIcons.horiz}</FlowCell>
        <FlowCell>{GlyphIcons.wrap}</FlowCell>
      </FlowSeg>
      <PropLabel $mt={5}>Dimensions</PropLabel>
      <FieldGrid>
        <Field>
          <FieldKey>W</FieldKey>48
          <FieldCaret>
            <Caret c="#b0b0b0" />
          </FieldCaret>
        </Field>
        <Field>
          <FieldKey>H</FieldKey>48
          <FieldCaret>
            <Caret c="#b0b0b0" />
          </FieldCaret>
        </Field>
        <CenterCell>{GlyphIcons.resize}</CenterCell>
      </FieldGrid>
      <ClipRow>
        <CheckBox>
          <Check size={12} strokeWidth={1} />
        </CheckBox>
        Clip content
      </ClipRow>
    </Section>

    <Section $pb={16}>
      <TitleRow>
        Appearance
        <Grow />
        <SectionIcon>
          <Eye size={16} strokeWidth={1} />
        </SectionIcon>
        <SectionIcon>
          <Droplet size={16} strokeWidth={1} />
        </SectionIcon>
      </TitleRow>
      <FieldGrid $auto>
        <PropLabel $mt={11}>Opacity</PropLabel>
        <PropLabel $mt={11}>Corner radius</PropLabel>
      </FieldGrid>
      <FieldGrid>
        <Field>
          {GlyphIcons.opacity}
          100%
        </Field>
        <Field>
          {GlyphIcons.corners}8
        </Field>
        <CenterCell>{GlyphIcons.corners}</CenterCell>
      </FieldGrid>
    </Section>

    <Section $pb={17}>
      <TitleRow>
        Fill
        <Grow />
        <SectionIcon>{GlyphIcons.styles}</SectionIcon>
        <SectionIcon>
          <Plus size={15} strokeWidth={1} />
        </SectionIcon>
      </TitleRow>
      <FillRow>
        <FillField>
          <FillChip />
          color/supplementary/100
        </FillField>
        <SectionIcon>
          <Eye size={16} strokeWidth={1} />
        </SectionIcon>
        <SectionIcon>
          <Minus size={15} strokeWidth={1} />
        </SectionIcon>
      </FillRow>
    </Section>

    <FoldedSection title="Stroke" />
    <FoldedSection title="Effects" />
    <FoldedSection title="Layout guide" />
    <FoldedSection title="Export" />

    <HelpBtn>?</HelpBtn>
  </RightPanel>
);

export default function App() {
  return (
    <Window>
      <GlobalStyle />
      <TabBar>
        <HomeTab>
          <HomeIcon />
        </HomeTab>
        <FileTab>
          <PenIcon s={15} />
          <FileTabName>Untitled</FileTabName>
          <X size={15} strokeWidth={1} color="#c8c8c8" />
        </FileTab>
        <NewTab>
          <Plus size={13} strokeWidth={1.5} />
        </NewTab>
        <TabSpacer />
        <WinControl>
          <svg width="12" height="8" viewBox="0 0 12 8" fill="none" stroke="#999">
            <path d="M1 1.5l5 5 5-5" />
          </svg>
        </WinControl>
        <WinControl>
          <svg width="12" height="2" viewBox="0 0 12 2" stroke="#c8c8c8">
            <path d="M1 1h10" />
          </svg>
        </WinControl>
        <WinControl>
          <svg width="12" height="12" viewBox="0 0 12 12" fill="none" stroke="#c8c8c8">
            <rect x="1" y="3" width="8" height="8" rx="1" />
            <path d="M3 3V1.5A.5.5 0 0 1 3.5 1H10a1 1 0 0 1 1 1v6.5a.5.5 0 0 1-.5.5H9" />
          </svg>
        </WinControl>
        <WinControl>
          <X size={15} strokeWidth={1} />
        </WinControl>
      </TabBar>
      <Body>
        <LeftPanel>
          <LeftBlock $h={97}>
            <LogoRow>
              <FigmaLogo />
              <Caret />
              <Grow />
              <SidebarIcon />
            </LogoRow>
            <ProjectName>
              Untitled
              <Caret />
            </ProjectName>
            <ProjectMeta>
              Drafts
              <FreeBadge>Free</FreeBadge>
            </ProjectMeta>
          </LeftBlock>
          <LeftBlock $h={41}>
            <TabsRow>
              <PillTab $on>File</PillTab>
              <PillTab>Assets</PillTab>
              <Grow />
              <SectionIcon>
                <Search size={15} strokeWidth={1} />
              </SectionIcon>
            </TabsRow>
          </LeftBlock>
          <LeftBlock $h={112}>
            <SectionHead>
              Pages
              <SectionIcon>
                <Plus size={15} strokeWidth={1} />
              </SectionIcon>
            </SectionHead>
            <PageList>
              <PageRow>Page 1</PageRow>
              <PageRow $on>Design System</PageRow>
            </PageList>
          </LeftBlock>
          <LayerHead>
            Layers
            <SectionIcon>
              <CollapseIcon />
            </SectionIcon>
          </LayerHead>
          <Layers />
        </LeftPanel>
        <DesignCanvas />
        <Inspector />
      </Body>
    </Window>
  );
}
